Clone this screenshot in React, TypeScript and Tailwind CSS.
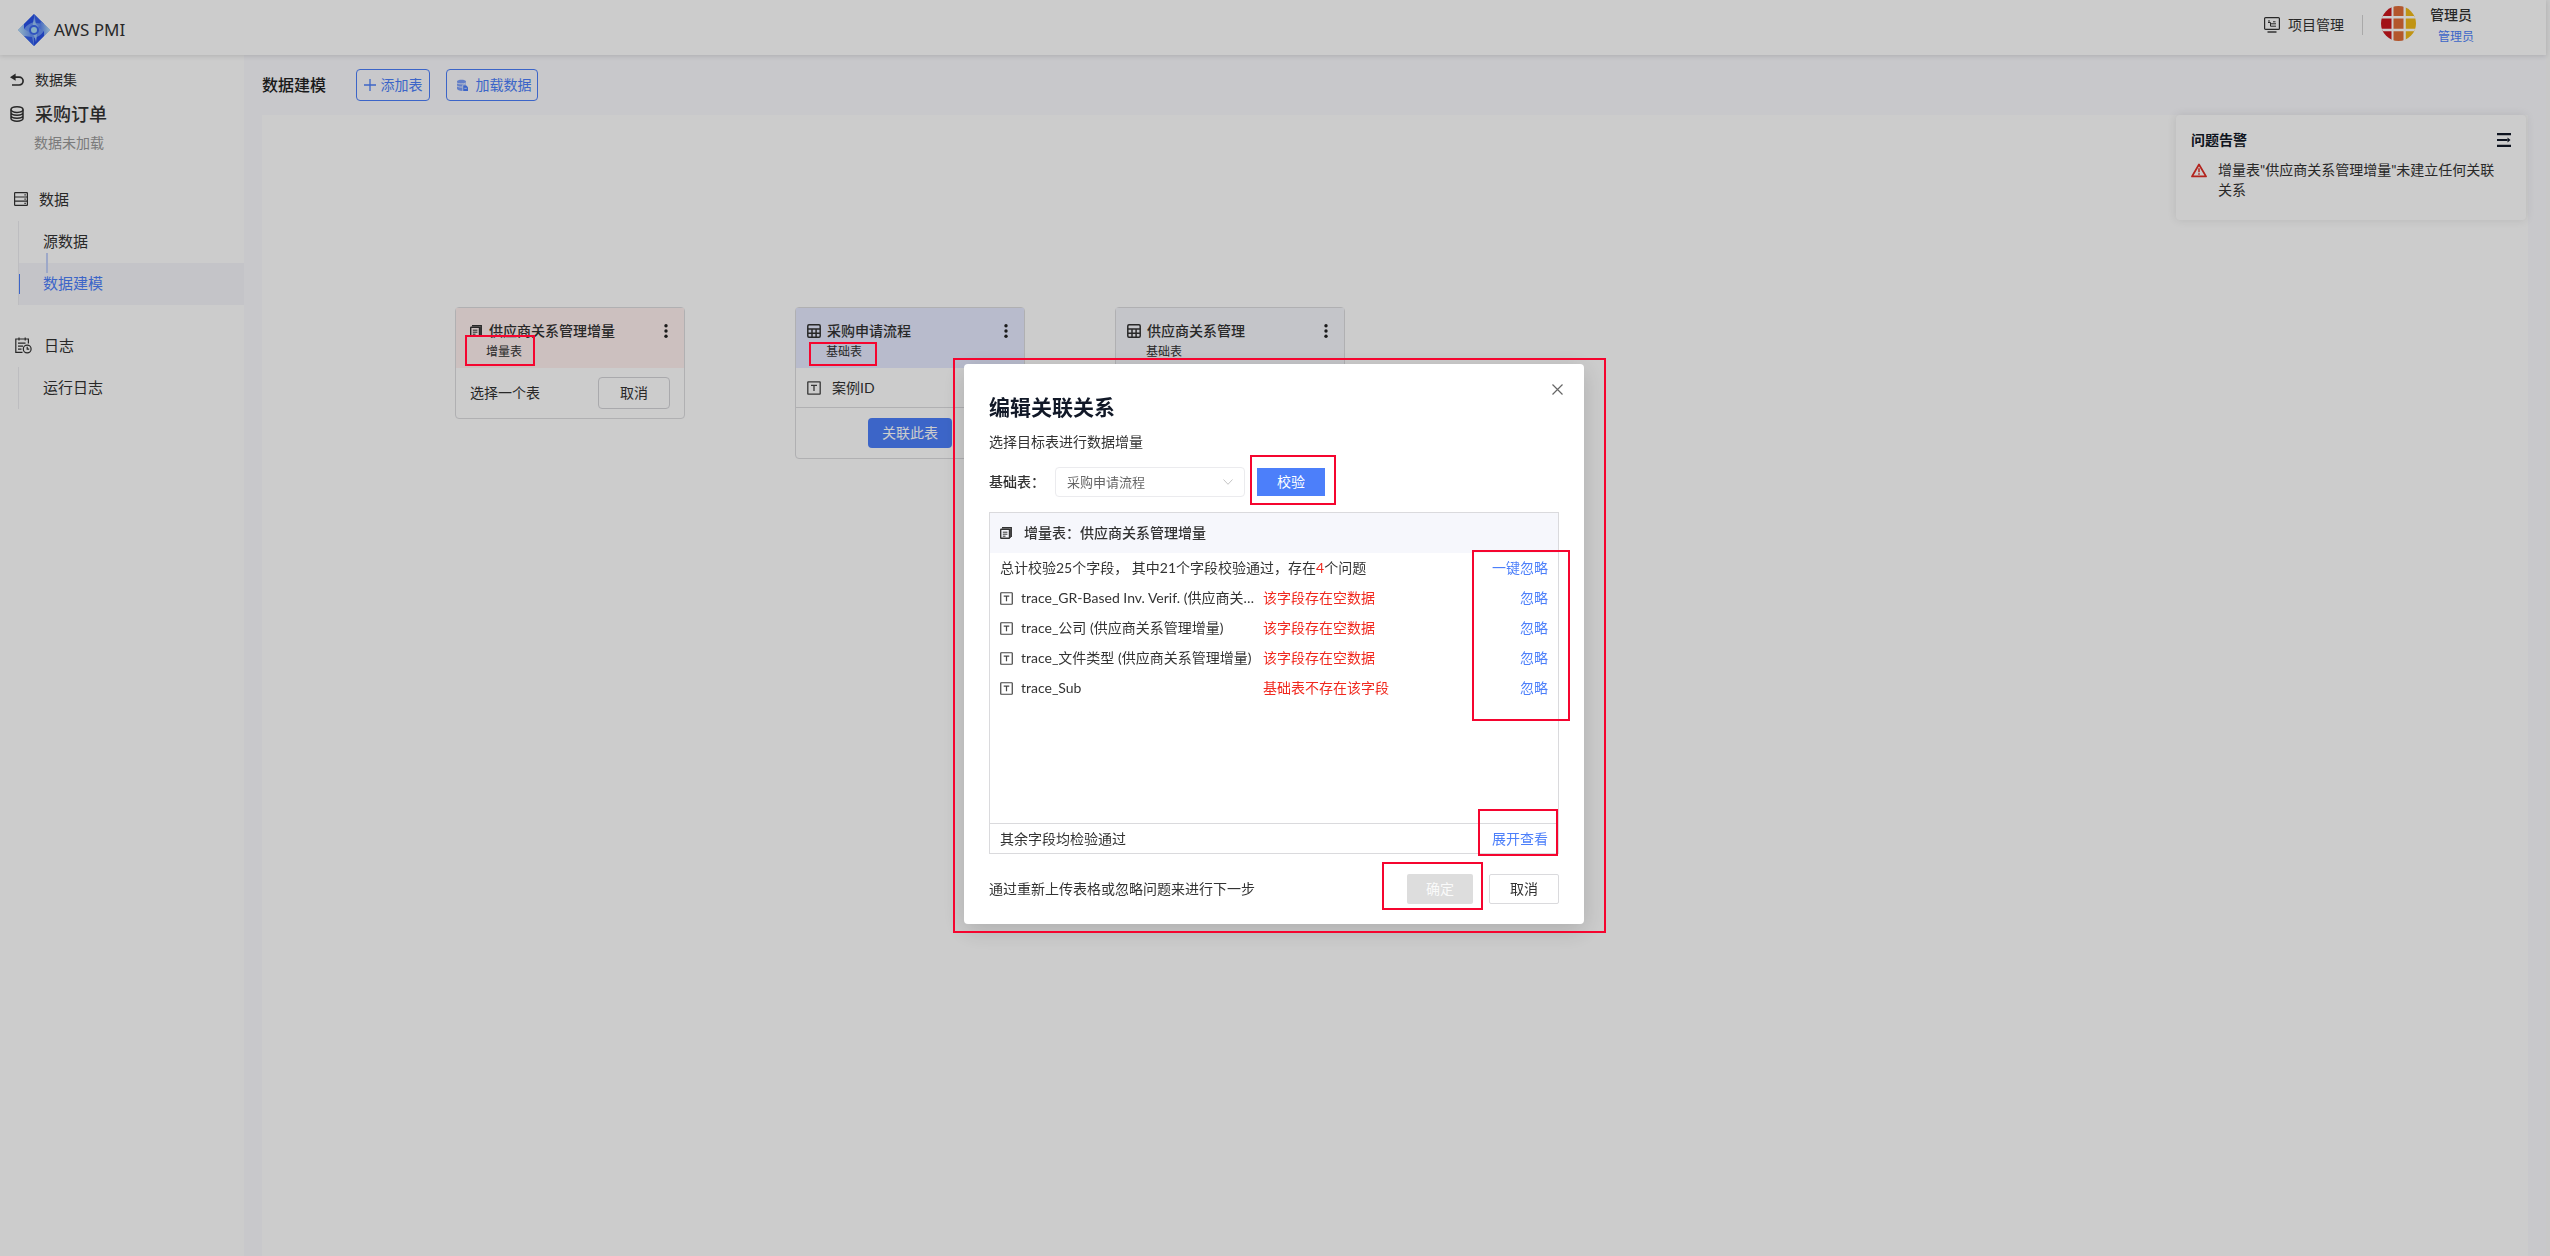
import type { ReactNode } from "react";
import clsx from "clsx";

const issues = [
  { field: "trace_GR-Based Inv. Verif. (供应商关系管理增量)", problem: "该字段存在空数据" },
  { field: "trace_公司 (供应商关系管理增量)", problem: "该字段存在空数据" },
  { field: "trace_文件类型 (供应商关系管理增量)", problem: "该字段存在空数据" },
  { field: "trace_Sub", problem: "基础表不存在该字段" },
];

/* ---------- icons ---------- */

function LogoIcon() {
  return (
    <svg width="32" height="32" viewBox="0 0 32 32" aria-hidden="true">
      <defs>
        <linearGradient id="logoA" x1="0" y1="0" x2="1" y2="0">
          <stop offset="0" stopColor="#b9e2f5" />
          <stop offset="1" stopColor="#5b86f5" />
        </linearGradient>
        <linearGradient id="logoB" x1="0" y1="0" x2="1" y2="0">
          <stop offset="0" stopColor="#4f79f2" />
          <stop offset="1" stopColor="#b9e2f5" />
        </linearGradient>
      </defs>
      <path d="M16 0 32 16 16 32 0 16Z" fill="#6a95f6" />
      <path d="M16 0 6 10v5c3-4 6-6 10-7Z" fill="#2950e8" />
      <path d="M16 0 26 10 18 9Z" fill="#3560ec" />
      <path d="M0 16 6 10v5l5 3 5 14Z" fill="url(#logoA)" />
      <path d="M16 32 26 22v-5c-3 4-6 6-10 7Z" fill="#2950e8" />
      <path d="M16 32 6 22l8 1Z" fill="#3560ec" />
      <path d="M32 16 26 22v-5l-5-3 2-7Z" fill="url(#logoB)" />
      <path d="M16 4c1 4 1 5 4 8l-2 16c-1-4-1-6-5-9Z" fill="#9cc6f8" />
      <circle cx="16" cy="16" r="4" fill="#a9dcf7" stroke="#3c68ef" strokeWidth="2" />
    </svg>
  );
}

function BackIcon() {
  return (
    <svg width="14" height="14" viewBox="0 0 14 14" fill="none" aria-hidden="true">
      <path d="M3 4.2h6.2a3.9 3.9 0 0 1 0 7.8H2" stroke="#333" strokeWidth="1.7" />
      <path d="M0 4.2 5.6.6v7.2Z" fill="#333" />
    </svg>
  );
}

function DatabaseIcon() {
  return (
    <svg width="14" height="16" viewBox="0 0 14 16" fill="none" stroke="#333" strokeWidth="1.5" aria-hidden="true">
      <ellipse cx="7" cy="3.6" rx="6" ry="2.8" />
      <path d="M1 3.6v8.8c0 1.500 2.700 2.800 6 2.800s6-1.300 6-2.800V3.600M1 6.600c0 1.500 2.700 2.700 6 2.700s6-1.200 6-2.700M1 9.600c0 1.500 2.700 2.700 6 2.700s6-1.200 6-2.700" />
    </svg>
  );
}

function RowsIcon() {
  return (
    <svg width="14" height="14" viewBox="0 0 14 14" fill="none" stroke="#333" strokeWidth="1.2" aria-hidden="true">
      <rect x=".6" y=".6" width="12.8" height="12.8" rx=".6" />
      <path d="M.6 5h12.800M.6 9.200h12.800M10.400 2.800h1.400M10.400 7.100h1.400M10.400 11.300h1.400" />
    </svg>
  );
}

function LogIcon() {
  return (
    <svg width="17" height="17" viewBox="0 0 17 17" fill="none" stroke="#333" strokeWidth="1.2" aria-hidden="true">
      <path d="M7.500 15.400H.8V2h12.600v4.500M4 .4v3M10.200.4v3M3 6.200h7.500M3 9.200h5M3 12.200h3.500" />
      <circle cx="12.2" cy="12" r="3.9" />
      <path d="M12.200 9.700v2.500h2" />
    </svg>
  );
}

function ProjectIcon() {
  return (
    <svg width="16" height="16" viewBox="0 0 16 16" fill="none" stroke="#333" aria-hidden="true">
      <rect x=".6" y=".6" width="14.800" height="11.800" rx="1" strokeWidth="1.200" />
      <path d="M3.500 15h9" strokeWidth="1.400" />
      <path d="M5 3v2.500M4 5.500h2.500v3.700h5.500M6.500 6.800H12M9 4.800h2.500" />
    </svg>
  );
}

function LoadIcon() {
  return (
    <svg width="11" height="12" viewBox="0 0 11 12" aria-hidden="true">
      <path d="M0 2.500C0 .2 9 .2 9 2.500V5.500H5.500V12C2.500 12 0 11 0 9.800Z" fill="#7d9ff9" />
      <path d="M0 4c1.500 1.200 6 1.200 9 0M0 7c1.500 1 3.500 1.200 5.500 1" stroke="#fff" fill="none" strokeWidth=".8" />
      <path d="M6.200 6.200H9l2 2V12H6.200Z" fill="#4c7ffa" />
      <path d="M7.300 9.300h2.500" stroke="#fff" strokeWidth=".7" />
    </svg>
  );
}

function PlusIcon() {
  return (
    <svg width="12" height="12" viewBox="0 0 12 12" stroke="#4c7ffa" strokeWidth="1.300" aria-hidden="true">
      <path d="M6 0v12M0 6h12" />
    </svg>
  );
}

function Avatar() {
  return (
    <svg width="35" height="35" viewBox="0 0 35 35" aria-hidden="true">
      <clipPath id="avatarClip">
        <circle cx="17.500" cy="17.500" r="17.500" />
      </clipPath>
      <g clipPath="url(#avatarClip)">
        <path d="M0 0h10.500v35H0Z" fill="#cb161c" />
        <path d="M12.500 0h10v35h-10Z" fill="#e06c38" />
        <path d="M24.800 0H35v35H24.800Z" fill="#f0b91a" />
        <path d="M0 11.300h35M0 24h35" stroke="#fff" strokeWidth="2.400" />
      </g>
    </svg>
  );
}

function CollapseIcon() {
  return (
    <svg width="14" height="14" viewBox="0 0 14 14" fill="none" stroke="#111827" strokeWidth="2.200" aria-hidden="true">
      <path d="M0 1.200h14M0 7h10.500M0 12.800h14" />
      <path d="M10.500 4.500 13.500 7l-3 2.500Z" fill="#111827" stroke="none" />
    </svg>
  );
}

function WarningIcon() {
  return (
    <svg width="16" height="15" viewBox="0 0 16 15" fill="none" stroke="#e02d25" aria-hidden="true">
      <path d="M8 1.500 15 13.400H1Z" strokeWidth="1.800" strokeLinejoin="round" />
      <path d="M8 5.200v4M8 10.200v1.600" strokeWidth="1.500" />
    </svg>
  );
}

function CopyIcon() {
  return (
    <svg width="12" height="12" viewBox="0 0 12 12" fill="none" stroke="#333" aria-hidden="true">
      <path d="M2 .8h9.200v9.200" strokeWidth="1.500" />
      <path d="M10 2v9" strokeWidth="1.500" />
      <rect x=".7" y="2.300" width="8.800" height="9" rx=".5" strokeWidth="1.400" />
      <path d="M2.800 5.200h4.600M2.800 7.200h4.600M2.800 9.200h2.700" />
    </svg>
  );
}

function TableIcon() {
  return (
    <svg width="14" height="14" viewBox="0 0 14 14" fill="none" stroke="#333" strokeWidth="1.500" aria-hidden="true">
      <rect x=".8" y=".8" width="12.400" height="12.400" rx="1.200" />
      <path d="M.8 5h12.400M.8 9.200h12.400M5 5v8M9.100 5v8" />
    </svg>
  );
}

function TextTypeIcon({ size }: { size: number }) {
  return (
    <svg width={size} height={size} viewBox="0 0 14 14" fill="none" stroke="#444" strokeWidth="1.300" aria-hidden="true">
      <rect x=".8" y=".8" width="12.400" height="12.400" rx=".5" />
      <path d="M4 4.400h6M7 4.400V10" />
    </svg>
  );
}

function MoreIcon() {
  return (
    <svg width="4" height="14" viewBox="0 0 4 14" fill="#222" aria-hidden="true">
      <circle cx="2" cy="1.800" r="1.700" />
      <circle cx="2" cy="7" r="1.700" />
      <circle cx="2" cy="12.200" r="1.700" />
    </svg>
  );
}

/* Red annotation frame, always drawn above the mask */
function Mark({ className }: { className: string }) {
  return <span className={clsx("pointer-events-none absolute z-50 border-2 border-[#f5052f]", className)} />;
}

/* ---------- page shell ---------- */

function Header() {
  return (
    <header className="relative z-10 flex h-[55px] items-center justify-between bg-white pr-[72px] pl-[18px] shadow-[0_1px_5px_rgba(0,0,0,0.14)]">
      <div className="flex items-center gap-1 pt-1">
        <LogoIcon />
        <span className="font-['Noto_Sans'] text-[17px] leading-6">AWS PMI</span>
      </div>
      <div className="flex h-full items-start">
        <a href="#projects" className="mt-[15px] flex items-center gap-2 text-sm leading-5">
          <ProjectIcon />
          项目管理
        </a>
        <span className="mt-[15px] ml-[18px] h-5 w-px bg-[#d4d4d4]" />
        <div className="mt-1.5 ml-[18px]">
          <Avatar />
        </div>
        <div className="mt-[5px] ml-[14px]">
          <p className="text-sm leading-5 font-medium">管理员</p>
          <p className="mt-0.5 pl-2 text-xs leading-5 text-[#4c7ffa]">管理员</p>
        </div>
      </div>
    </header>
  );
}

function Sidebar() {
  return (
    <aside className="w-[244px] shrink-0 bg-white pt-[15px] shadow-[2px_0_5px_rgba(80,90,200,0.10)]">
      <a href="#datasets" className="flex h-5 items-center gap-[11px] pl-2.5 text-sm">
        <BackIcon />
        数据集
      </a>
      <h1 className="mt-3 flex h-6 items-center gap-[11px] pl-2.5 text-lg font-medium">
        <DatabaseIcon />
        采购订单
      </h1>
      <p className="mt-[7px] pl-[34px] text-sm leading-5 text-[#9a9a9a]">数据未加载</p>

      <nav className="mt-6 text-[15px]">
        <div className="flex h-11 items-center gap-[11px] pl-3.5">
          <RowsIcon />
          数据
        </div>
        <ul className="ml-[18px] border-l border-[#ededf0]">
          <li className="relative z-10 flex h-[42px] items-center pb-0.5 pl-6">
            <a href="#source">源数据</a>
            <span className="absolute top-8 left-[27px] h-5 w-0.5 bg-[#c5d3fb]" />
          </li>
          <li className="relative flex h-[42px] items-center bg-[#f5f6fb] pb-0.5 pl-6">
            <span className="absolute top-[11px] left-0 h-5 w-px bg-[#4c7ffa]" />
            <a href="#model" className="text-[#4c7ffa]">
              数据建模
            </a>
          </li>
        </ul>
        <div className="mt-[18px] flex h-11 items-center gap-3 pl-[15px]">
          <LogIcon />
          日志
        </div>
        <ul className="ml-[18px] border-l border-[#ededf0]">
          <li className="flex h-[42px] items-center pb-0.5 pl-6">
            <a href="#runlog">运行日志</a>
          </li>
        </ul>
      </nav>
    </aside>
  );
}

/* ---------- canvas ---------- */

type NodeProps = {
  className: string;
  headClass: string;
  icon: ReactNode;
  title: string;
  kind: string;
  mark?: ReactNode;
  children: ReactNode;
};

function TableNode({ className, headClass, icon, title, kind, mark, children }: NodeProps) {
  return (
    <section className={clsx("absolute top-48 w-[230px] rounded-sm border border-[#dcdcdf] bg-white", className)}>
      <div className={clsx("relative h-[60px] pt-[13px] pr-4", headClass)}>
        <div className="flex h-5 items-center">
          {icon}
          <h3 className="flex-1 text-sm font-medium">{title}</h3>
          <button type="button" aria-label="更多">
            <MoreIcon />
          </button>
        </div>
        <p className="mt-px pl-[30px] text-xs leading-5">{kind}</p>
        {mark}
      </div>
      {children}
    </section>
  );
}

function BaseTableBody() {
  return (
    <>
      <div className="flex h-10 items-center gap-[11px] border-b border-[#dcdcdf] pl-[11px] text-sm">
        <TextTypeIcon size={14} />
        案例ID
      </div>
      <div className="flex justify-center py-2.5">
        <button type="button" className="h-[30px] w-[84px] rounded-sm bg-[#4c7ffa] text-sm text-white">
          关联此表
        </button>
      </div>
    </>
  );
}

function Canvas() {
  return (
    <div className="relative mr-[18px] ml-[18px] flex-1 bg-white">
      <TableNode
        className="left-[193px]"
        headClass="bg-[#fff0ef]"
        icon={<span className="mr-[7px] ml-3.5"><CopyIcon /></span>}
        title="供应商关系管理增量"
        kind="增量表"
        mark={<Mark className="top-[27px] left-[9px] h-[31px] w-[70px]" />}
      >
        <div className="flex items-center justify-between py-[9px] pr-3.5 pl-3.5">
          <span className="text-sm">选择一个表</span>
          <button type="button" className="h-8 w-[72px] rounded-sm border border-[#d4d4d8] text-sm">
            取消
          </button>
        </div>
      </TableNode>

      <TableNode
        className="left-[533px]"
        headClass="bg-[#e6eaff]"
        icon={<span className="mr-1.5 ml-[11px]"><TableIcon /></span>}
        title="采购申请流程"
        kind="基础表"
        mark={<Mark className="top-[34px] left-[13px] h-6 w-[68px]" />}
      >
        <BaseTableBody />
      </TableNode>

      <TableNode
        className="left-[853px]"
        headClass="bg-[#f6f7fc]"
        icon={<span className="mr-1.5 ml-[11px]"><TableIcon /></span>}
        title="供应商关系管理"
        kind="基础表"
      >
        <BaseTableBody />
      </TableNode>

      <section className="absolute top-0 right-0.5 w-[350px] rounded bg-white px-[15px] pt-[15px] pb-5 shadow-[0_0_10px_rgba(0,0,0,0.10)]">
        <div className="flex items-center justify-between">
          <h2 className="text-sm leading-5 font-bold text-[#111827]">问题告警</h2>
          <button type="button" aria-label="收起">
            <CollapseIcon />
          </button>
        </div>
        <div className="mt-2.5 flex items-start gap-[11px]">
          <span className="mt-[3px] shrink-0">
            <WarningIcon />
          </span>
          <p className="w-[285px] text-sm leading-5">增量表"供应商关系管理增量"未建立任何关联关系</p>
        </div>
      </section>
    </div>
  );
}

/* ---------- dialog ---------- */

function RelationDialog() {
  return (
    <div className="fixed inset-0 z-40 flex items-center justify-center bg-black/20 pt-8 pr-0.5">
      <div
        role="dialog"
        aria-labelledby="relation-title"
        className="relative w-[620px] rounded bg-white px-[25px] pt-7 pb-5 text-sm shadow-[0_6px_24px_rgba(0,0,0,0.16)]"
      >
        <Mark className="-top-1.5 -right-[22px] -bottom-[9px] -left-[11px]" />
        <button type="button" aria-label="关闭" className="absolute top-5 right-[21px]">
          <svg width="11" height="11" viewBox="0 0 11 11" stroke="#666" strokeWidth="1.200" aria-hidden="true">
            <path d="m.5.5 10 10M10.500.5l-10 10" />
          </svg>
        </button>

        <h2 id="relation-title" className="text-[21px] leading-[30px] font-bold text-[#111827]">
          编辑关联关系
        </h2>
        <p className="mt-2.5 leading-5">选择目标表进行数据增量</p>

        <div className="mt-[15px] flex items-center">
          <label htmlFor="base-table" className="w-[66px] font-medium">
            基础表：
          </label>
          <div className="relative">
            <select
              id="base-table"
              className="h-[30px] w-[190px] appearance-none rounded-sm border border-[#ebebee] bg-white pl-[11px] text-[13px] text-[#666]"
            >
              <option>采购申请流程</option>
            </select>
            <svg className="absolute top-3 right-3 text-[#c4c4c4]" width="10" height="6" viewBox="0 0 10 6" fill="none" stroke="currentColor" aria-hidden="true">
              <path d="m.5.5 4.500 4.800L9.500.5" />
            </svg>
          </div>
          <div className="relative ml-3">
            <button type="button" className="block h-7 w-[68px] bg-[#4c7ffa] text-white">
              校验
            </button>
            <Mark className="-top-[13px] -right-[11px] -bottom-[9px] -left-[7px]" />
          </div>
        </div>

        <div className="mt-[15px] border border-[#dadadd]">
          <div className="flex h-10 items-center gap-3 bg-[#f6f7fc] px-2.5 font-medium">
            <CopyIcon />
            增量表：供应商关系管理增量
          </div>
          <div className="relative h-[270px]">
            <div className="flex h-[30px] items-center justify-between px-2.5">
              <p>
                总计校验25个字段， 其中21个字段校验通过，存在<span className="text-[#f0281e]">4</span>个问题
              </p>
              <button type="button" className="text-[#4c7ffa]">
                一键忽略
              </button>
            </div>
            <table className="w-full table-fixed text-left">
              <tbody>
                {issues.map((row) => (
                  <tr key={row.field} className="h-[30px]">
                    <td className="w-[273px] p-0 pl-2.5">
                      <div className="flex items-center gap-2 pr-1">
                        <span className="shrink-0">
                          <TextTypeIcon size={13} />
                        </span>
                        <span className="truncate">{row.field}</span>
                      </div>
                    </td>
                    <td className="p-0 text-[#f0281e]">{row.problem}</td>
                    <td className="w-20 p-0 pr-2.5 text-right">
                      <button type="button" className="text-[#4c7ffa]">
                        忽略
                      </button>
                    </td>
                  </tr>
                ))}
              </tbody>
            </table>
            <Mark className="-top-[3px] -right-3 h-[171px] w-[98px]" />
          </div>
          <div className="relative flex h-[30px] items-center justify-between border-t border-[#dadadd] px-2.5">
            <span>其余字段均检验通过</span>
            <button type="button" className="text-[#4c7ffa]">
              展开查看
            </button>
            <Mark className="-top-[15px] right-0 -bottom-[3px] w-20" />
          </div>
        </div>

        <div className="mt-5 flex items-center">
          <p className="flex-1">通过重新上传表格或忽略问题来进行下一步</p>
          <div className="relative">
            <button type="button" disabled className="block h-[30px] w-[66px] rounded-xs bg-[#dddddd] text-[#fafafa]">
              确定
            </button>
            <Mark className="-top-3 -right-2.5 -bottom-1.5 -left-[25px]" />
          </div>
          <button type="button" className="ml-4 h-[30px] w-[70px] rounded-xs border border-[#dadadd]">
            取消
          </button>
        </div>
      </div>
    </div>
  );
}

export default function App() {
  return (
    <div className="flex min-h-screen flex-col bg-[#fafafa] pr-1 font-[Lato,'Noto_Sans_CJK_SC',sans-serif] text-[#333]">
      <Header />
      <div className="flex flex-1">
        <Sidebar />
        <main className="flex flex-1 flex-col bg-[#fafafe]">
          <div className="flex h-[60px] items-center pl-[18px]">
            <h2 className="text-base font-medium text-[#222]">数据建模</h2>
            <button
              type="button"
              className="ml-[30px] flex h-8 w-[74px] items-center justify-center gap-[5px] rounded-sm border border-[#4c7ffa] text-sm text-[#4c7ffa]"
            >
              <PlusIcon />
              添加表
            </button>
            <button
              type="button"
              className="ml-4 flex h-8 w-[92px] items-center justify-center gap-2 rounded-sm border border-[#4c7ffa] pl-1 text-sm text-[#4c7ffa]"
            >
              <LoadIcon />
              加载数据
            </button>
          </div>
          <Canvas />
        </main>
      </div>
      <RelationDialog />
    </div>
  );
}
